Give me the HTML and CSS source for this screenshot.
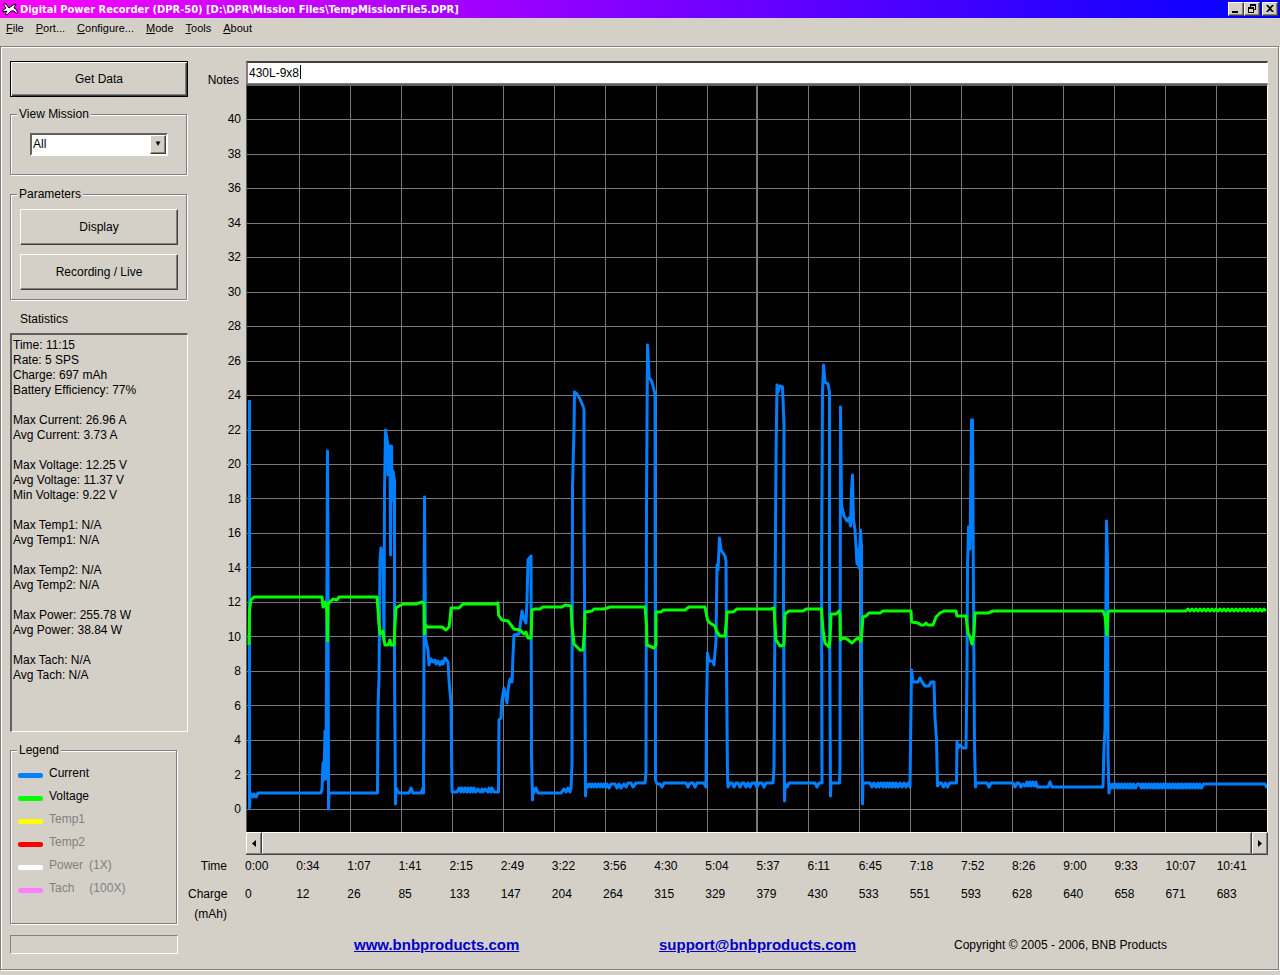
FILE: index.html
```html
<!DOCTYPE html>
<html lang="en">
<head>
    <meta charset="UTF-8">
    <meta name="viewport" content="width=device-width, initial-scale=1.0">
    <title>Digital Power Recorder (DPR-50)</title>
    <link rel="stylesheet" href="styles.css">
</head>
<body>
    <header class="titlebar">
        <svg class="app-icon" width="16" height="16" viewBox="0 0 16 16">
            <path d="M1 3h3l3 4 4-3 3-1-2 4 2 1 2 4-2 0-2-2-3 0-4 4-2-1 2-3-4 1 0-2 3-2z" fill="#fff" stroke="#000" stroke-width="1"/>
        </svg>
        <h1>Digital Power Recorder (DPR-50) [D:\DPR\Mission Files\TempMissionFile5.DPR]</h1>
        <div class="window-buttons">
            <button aria-label="Minimize"><svg width="12" height="10" viewBox="0 0 12 10"><path d="M2 7h6v2H2z"/></svg></button>
            <button aria-label="Restore"><svg width="12" height="10" viewBox="0 0 12 10"><path d="M4 0h6v6H8V5h1V2H5v1H4zM2 3h6v6H2zM3 5v3h4V5z" fill-rule="evenodd"/></svg></button>
            <button aria-label="Close" class="close"><svg width="12" height="10" viewBox="0 0 12 10"><path d="M2 1h2l2 2 2-2h2L7 4.500 10 8H8L6 6 4 8H2l3-3.500z"/></svg></button>
        </div>
    </header>

    <nav class="menubar">
        <button><u>F</u>ile</button>
        <button><u>P</u>ort...</button>
        <button><u>C</u>onfigure...</button>
        <button><u>M</u>ode</button>
        <button><u>T</u>ools</button>
        <button><u>A</u>bout</button>
    </nav>

    <main class="frame">
        <aside class="sidebar">
            <button class="btn default">Get Data</button>

            <fieldset class="group mission">
                <legend>View Mission</legend>
                <div class="combo">
                    <select aria-label="View Mission">
                        <option>All</option>
                    </select>
                </div>
            </fieldset>

            <fieldset class="group params">
                <legend>Parameters</legend>
                <div class="param-buttons">
                    <button class="btn">Display</button>
                    <button class="btn">Recording / Live</button>
                </div>
            </fieldset>

            <h2 class="stats-title">Statistics</h2>
            <div class="stats">
                <p>Time: 11:15<br>Rate: 5 SPS<br>Charge: 697 mAh<br>Battery Efficiency: 77%</p>
                <p>Max Current: 26.96 A<br>Avg Current: 3.73 A</p>
                <p>Max Voltage: 12.25 V<br>Avg Voltage: 11.37 V<br>Min Voltage: 9.22 V</p>
                <p>Max Temp1: N/A<br>Avg Temp1: N/A</p>
                <p>Max Temp2: N/A<br>Avg Temp2: N/A</p>
                <p>Max Power: 255.78 W<br>Avg Power: 38.84 W</p>
                <p>Max Tach: N/A<br>Avg Tach: N/A</p>
            </div>

            <fieldset class="group series">
                <legend>Legend</legend>
                <ul>
                    <li class="current">Current</li>
                    <li class="voltage">Voltage</li>
                    <li class="temp1 off">Temp1</li>
                    <li class="temp2 off">Temp2</li>
                    <li class="power off">Power<span>(1X)</span></li>
                    <li class="tach off">Tach<span>(100X)</span></li>
                </ul>
            </fieldset>

            <div class="status"></div>
        </aside>

        <section class="chart">
            <label class="notes-label" for="notes">Notes</label>
            <div class="notes">
                <input type="text" id="notes" value="430L-9x8">
            </div>

            <div class="y-axis">
                <span>40</span><span>38</span><span>36</span><span>34</span><span>32</span><span>30</span><span>28</span>
                <span>26</span><span>24</span><span>22</span><span>20</span><span>18</span><span>16</span><span>14</span>
                <span>12</span><span>10</span><span>8</span><span>6</span><span>4</span><span>2</span><span>0</span>
            </div>
            <svg class="plot" viewBox="247 86 1020 746" preserveAspectRatio="none">
                <g class="grid">
                    <path d="M299.500 86v746M350.500 86v746M401.500 86v746M452.500 86v746M503.500 86v746M554.500 86v746M605.500 86v746M656.500 86v746M707.500 86v746M808.500 86v746M859.500 86v746M910.500 86v746M961.500 86v746M1012.500 86v746M1063.500 86v746M1114.500 86v746M1165.500 86v746M1216.500 86v746"/>
                    <path class="cursor" d="M757 86v746"/>
                    <path d="M247 119.500h1020M247 154.500h1020M247 188.500h1020M247 223.500h1020M247 257.500h1020M247 292.500h1020M247 326.500h1020M247 361.500h1020M247 395.500h1020M247 430.500h1020M247 464.500h1020M247 498.500h1020M247 533.500h1020M247 567.500h1020M247 602.500h1020M247 636.500h1020M247 671.500h1020M247 705.500h1020M247 740.500h1020M247 774.500h1020M247 809.500h1020"/>
                </g>
                <path class="trace current" d="M249.500 400V808L250 793l2 2 1 2 1-3 2 3 2-4H321L322 789 323 763 324 780 325 731 326 779 327 567 327.500 451 328 567 328.500 809 329 793H377.500
                    L378 708 379 678 380 560 381 548 383 559 384 640 384.500 492 385.500 430 388 446 388 475 390 446 390.500 555 391.500 446 392 500 393 471 394.500 482 394.500 667 395.500 804 396 788 397 790 399 793
                    H409L411 788 413 793H421L423 788 423.500 793 424.500 497 425.500 639 428 650 429 665 431 659 433 662 435 660 436 664 438 661 440 665 442 661 443 664 445 658 448 662 449 680 451 703 452 792
                    H457l2-4 2 4 1-4 2 4 1-4 2 4 1-4 2 4 1-4 2 4 1-4 2 4 2-3 2 3 2-3 1 3 2-3 3 3 1-4 2 4 1-4 2 4H498.500L499 720 501 718 502 700 504 688 507 703 508 690 510 679 512 682 513 655 514 635 519 634 522 611 524 619 526 623 527 600 528 560 531 556
                    L531.500 755 532.500 800 533 788 534 793 536 788 538 793H561l3-4 2 3 2-4 2 4 1-4 1-25L572 693 572.500 487 574 430 574.500 392 577 394 580 399 583 406 584 410 584 500 585 692 585.500 796 586 784
                    l2 3 1-3 2 3 1-3 2 3 1-3 2 3 1-3 2 3 1-3 2 3 1-3 2 3 1-3 2 4 2-4 4 0 2 4 2-4 2 4 3-4 2 3 2-4h3l2 4 3-4H645L646 772 646.500 504 647.500 345 649 377 652 382 655 394 655.500 780 657 784
                    H660l2 3 2-4H686l2 4 2-4h3l2 4 2-4H704l2 4L706.500 710 707.500 653 709 661 713 661 714 665 716 640 717 565 718 570 719.500 538 721 550 725 556 726 561 726.500 664 727.500 778 728 787
                    l2-4 2 0 2 4 2-4 2 0 2 4 2-4 2 0 2 4 2-4 2 4 2-4h3l2 4 2-4h3l2 4 2-4H773L774 768 775 610 776 457 777 385 778 392 780 386 782.500 387 784 425 783.500 600 784.500 801 785 784 787 787 789 783
                    H815l2 4 2-4h3L821.500 582 822.500 392 823.500 365 825 382 828 384 829.500 392 829.500 595 830.500 796 831 783H839.500L840 766 840.500 407 841.500 505 844 516 847 521 849 518 850.500 526 851.500 490 852.500 475 853.500 520 855 530 857 564 858 549 859 568 860.500 530 861.500 546 861.500 685 862.500 804 863 783
                    H870l2 4 2-4 2 4 2-4 1 4 2-4 2 4 1-4 2 4 1-4 2 4 1-4 2 4 1-4 2 4 1-4 2 4 2-4 2 4 2-4 2 4 2-4 2 4L911.500 670 913 682 918 682 920 678 922 682 925 686 929 686 931 682 934 682 935 718 936.500 740 937.500 786
                    l2-3 2 0 2 4 2-4 2 4 2-4H956.500L957 742 958 748 960 745 963 748 966 748 967 671 967.500 568 968.500 527 970 549 971.500 420 972.500 420 973.500 600 974.500 746 975.500 787 976 783H987l2 4 2-4H1013
                    l2 4 2-4h2l2 4 2-3 2 2 2-4 1 4 2-4 1 4 2-4 1 4 2-4 1 5H1048l2-5 2 5H1103L1104 748 1105 729 1106.500 521 1107.500 560 1108 755 1109 793 1109.500 784
                    l2 4 1-4 2 4 1-4 2 4 1-4 2 4 1-4 2 4 1-4 2 4 1-4 2 4 1-4 2 4 1-4 2 4 2-4 2 0 2 4 1-4 2 4 1-4 2 4 1-4 2 4 1-4 2 4 1-4 2 4 1-4 2 4 1-4 2 4 1-4 2 4 1-4 2 4 1-4 2 4 1-4 2 4 1-4 2 4 1-4 2 4 1-4 2 4 1-4 2 4 1-4 2 4 1-4 2 4 1-4 2 4 1-4 2 4 1-4 2 4 2-4H1265l2 4"/>
                <path class="trace voltage" d="M249 645L249.500 610 251 600 254 597H322L323 607 325 602 327 612 327.500 641 328 604 331 601 333 599 337 600 339 597H377L378 610 379 625 380 634 383 631 384 640 385 645 388 645 390 640 391 645 394 645 395 625 396 608 399 606 403 604H416L422 602 424 603 424.500 634 425 625 428 627H442L446 630 449 627 450 620 451 608
                    H459L463 604H495L498 603 498.500 615 502 620 508 621 514 629 520 630 524 634 526 632 528 638H531L532 610 535 609H540L543 607H562L565 605 571 606 572 625 574 644 580 650H583L584.500 630 585 612 592 611 594 609H604L610 607H645L646.500 625 647 645 654 648 656 645V612L661 612 663 610H685L689 607H705L707.500 620 710 623 715 626 717 632 720 636H725L726.500 620 727 612H733L737 609H771L774 608
                    L775 625 776 640 780 646 784 645 785 614 789 611H803L806 609H821.500L823 630 825 643 829 647 830 640 831 614H836L839 611 840 614 840.500 640 843 638 847 639 852 643 855 640 858 638 861 641 862 630 863 617 866 616 869 613H880L883 611H911L911.500 622 918 623 921 625H924L926 623 928 625H933L936 617 940 613 944 611H956L957 616H966L968 633 970 637 972 644 974 633 975 613H988L993 611
                    H1103L1105 616 1107 635 1108 612 1110 611H1186l2-2 2 2 2-2 2 2 2-2 2 2 2-2 2 2 2-2 2 2 2-2 2 2 2-2 2 2 2-2 2 2 2-2 2 2 2-2 2 2 2-2 2 2 2-2 2 2 2-2 2 2 2-2 2 2 2-2 2 2 2-2 2 2 2-2 2 2 2-2 2 2 2-2 2 2 2-2 2 2"/>
            </svg>

            <div class="scrollbar">
                <button aria-label="Scroll left"><svg width="4" height="7" viewBox="0 0 4 7"><path d="M4 0v7L0 3.500z"/></svg></button>
                <div class="thumb"></div>
                <button aria-label="Scroll right"><svg width="4" height="7" viewBox="0 0 4 7"><path d="M0 0v7l4-3.500z"/></svg></button>
            </div>

            <table class="x-axis">
                <tr>
                    <th scope="row">Time</th>
                    <td>0:00</td><td>0:34</td><td>1:07</td><td>1:41</td><td>2:15</td><td>2:49</td><td>3:22</td><td>3:56</td><td>4:30</td><td>5:04</td>
                    <td>5:37</td><td>6:11</td><td>6:45</td><td>7:18</td><td>7:52</td><td>8:26</td><td>9:00</td><td>9:33</td><td>10:07</td><td>10:41</td>
                </tr>
                <tr>
                    <th scope="row">Charge<br>(mAh)</th>
                    <td>0</td><td>12</td><td>26</td><td>85</td><td>133</td><td>147</td><td>204</td><td>264</td><td>315</td><td>329</td>
                    <td>379</td><td>430</td><td>533</td><td>551</td><td>593</td><td>628</td><td>640</td><td>658</td><td>671</td><td>683</td>
                </tr>
            </table>

            <footer class="links">
                <a href="http://www.bnbproducts.com">www.bnbproducts.com</a>
                <a href="mailto:support@bnbproducts.com">support@bnbproducts.com</a>
                <span>Copyright © 2005 - 2006, BNB Products</span>
            </footer>
        </section>
    </main>
</body>
</html>
```
FILE: styles.css
```css
*, *::before, *::after {
    box-sizing: border-box;
}
body {
    margin: 0;
    min-height: 100vh;
    display: flex;
    flex-direction: column;
    background: #d4d0c8;
    color: #000;
    font-family: "Liberation Sans", Arial, sans-serif;
    font-size: 12px;
    line-height: 15px;
}
button, input, select {
    font: inherit;
    color: inherit;
}

/* title bar */
.titlebar {
    display: flex;
    align-items: center;
    height: 18px;
    padding: 0 2px;
    background: linear-gradient(to right, #ff00ff, #0000ff);
}
.titlebar h1 {
    flex: 1;
    margin: 0 0 0 2px;
    color: #fff;
    font-family: "DejaVu Sans Condensed", "Liberation Sans", sans-serif;
    font-size: 11px;
    font-weight: bold;
    white-space: nowrap;
}
.window-buttons {
    display: flex;
}
.window-buttons button {
    width: 16px;
    height: 14px;
    padding: 0;
    border: 1px solid;
    border-color: #fff #404040 #404040 #fff;
    background: #d4d0c8;
    box-shadow: inset -1px -1px 0 #808080;
}
.window-buttons svg {
    display: block;
    margin: 1px;
}
.window-buttons .close {
    margin-left: 2px;
}

/* menu */
.menubar {
    display: flex;
    gap: 12px;
    height: 28px;
    padding: 2px 6px 0;
}
.menubar button {
    height: 16px;
    padding: 0;
    border: none;
    background: none;
    font-size: 11px;
}

/* etched frame */
.frame {
    flex: 1;
    display: flex;
    margin: 0 1px 5px 0;
    padding: 14px 10px 0 9px;
    border: 1px solid #808080;
    box-shadow: 1px 1px 0 #fff, inset 1px 1px 0 #fff;
}
.sidebar {
    display: flex;
    flex-direction: column;
    flex: none;
    width: 178px;
}

.btn {
    display: block;
    width: 100%;
    height: 36px;
    padding: 0;
    border: 1px solid;
    border-color: #fff #404040 #404040 #fff;
    background: #d4d0c8;
    box-shadow: inset -1px -1px 0 #808080;
}
.btn.default {
    border-color: #000;
    box-shadow: inset 1px 1px 0 #fff, inset -1px -1px 0 #404040, inset -2px -2px 0 #808080;
}

.group {
    min-width: 0;
    margin: 0 1px 0 0;
    padding: 0;
    border: 1px solid #808080;
    box-shadow: 1px 1px 0 #fff, inset 1px 1px 0 #fff;
}
.group > legend {
    margin-left: 6px;
    padding: 0 2px;
    background: #d4d0c8;
}
.mission {
    height: 68px;
    margin-top: 10px;
}
.params {
    height: 113px;
    margin-top: 12px;
}
.param-buttons {
    padding: 7px 8px 0 9px;
}
.params .btn + .btn {
    margin-top: 9px;
}

.combo {
    position: relative;
    margin: 11px 18px 0 19px;
}
.combo select {
    display: block;
    width: 100%;
    height: 23px;
    padding: 0 0 0 1px;
    border: 2px solid;
    border-color: #606060 #fff #fff #606060;
    border-radius: 0;
    background: #fff;
    appearance: none;
}
.combo::after {
    content: "▼";
    position: absolute;
    top: 2px;
    right: 2px;
    width: 16px;
    height: 19px;
    border: 1px solid;
    border-color: #fff #404040 #404040 #fff;
    background: #d4d0c8;
    box-shadow: inset -1px -1px 0 #808080;
    font-family: "Liberation Sans", Arial, sans-serif;
    font-size: 8px;
    line-height: 16px;
    text-align: center;
    pointer-events: none;
}

.stats-title {
    margin: 12px 0 6px 10px;
    font-size: 12px;
    font-weight: normal;
}
.stats {
    height: 399px;
    padding: 3px 1px;
    border: 2px solid;
    border-color: #606060 #fff #fff #606060;
    border-right-width: 1px;
    border-bottom-width: 1px;
}
.stats p {
    margin: 0 0 15px;
}

.series {
    width: 167px;
    height: 181px;
    margin-top: 11px;
}
.series ul {
    margin: 0;
    padding: 4px 7px;
    list-style: none;
}
.series li {
    display: flex;
    align-items: center;
    height: 23px;
}
.series li::before {
    content: "";
    width: 25px;
    height: 5px;
    margin: 4px 6px 0 0;
    border-radius: 2px;
    background: #0080ff;
}
.series li.voltage::before { background: #00ff00; }
.series li.temp1::before { background: #ffff00; }
.series li.temp2::before { background: #ff0000; }
.series li.power::before { background: #fff; }
.series li.tach::before { background: #ff80ff; }
.series .off {
    color: #808080;
}
.series .power span {
    margin-left: 6px;
}
.series .tach span {
    margin-left: 15px;
}

.status {
    width: 168px;
    height: 19px;
    margin-top: 11px;
    border: 1px solid;
    border-color: #808080 #fff #fff #808080;
}

/* chart */
.chart {
    flex: 1;
    min-width: 0;
    display: grid;
    grid-template-columns: 58px 1fr;
    grid-template-rows: 23px auto auto auto auto;
    align-content: start;
}
.notes-label {
    padding: 12px 7px 0 0;
    text-align: right;
}
.notes {
    position: relative;
}
.notes input {
    display: block;
    width: 100%;
    height: 23px;
    padding: 0 1px;
    border: 1px solid;
    border-color: #404040 #fff #808080 #808080;
    border-top-width: 2px;
    border-left-width: 2px;
    background: #fff;
    outline: none;
}
/* text caret */
.notes::after {
    content: "";
    position: absolute;
    top: 4px;
    left: 54px;
    width: 1px;
    height: 14px;
    background: #000;
}
.y-axis {
    display: flex;
    flex-direction: column;
    justify-content: space-between;
    padding: 28px 5px 15px 0;
    text-align: right;
}
.plot {
    display: block;
    width: 100%;
    height: 748px;
    border: 1px solid;
    border-color: #606060 #fff #000 #606060;
    border-top-width: 2px;
    border-bottom: none;
    background: #000;
}
.grid path {
    stroke: #787878;
    fill: none;
    shape-rendering: crispEdges;
}
.grid .cursor {
    stroke-width: 2;
}
.trace {
    fill: none;
    stroke-width: 3;
    stroke-linejoin: round;
}
.trace.current {
    stroke: #0080ff;
}
.trace.voltage {
    stroke: #00ff00;
}

.scrollbar {
    grid-column: 2;
    display: flex;
    height: 23px;
    border-bottom: 1px solid #404040;
}
.scrollbar button, .thumb {
    border: 1px solid;
    border-color: #fff #404040 #808080 #fff;
    background: #d4d0c8;
    box-shadow: inset -1px 0 0 #808080;
}
.scrollbar button {
    display: flex;
    align-items: center;
    justify-content: center;
    width: 16px;
    padding: 0;
}
.thumb {
    flex: 1;
}

.x-axis {
    grid-column: 1 / 3;
    width: 100%;
    margin-top: 1px;
    table-layout: fixed;
    border-collapse: collapse;
    line-height: 20px;
}
.x-axis th {
    width: 57px;
    padding: 0 18px 8px 0;
    font-weight: normal;
    text-align: right;
    vertical-align: top;
}
.x-axis td {
    padding: 0;
    vertical-align: top;
}

.links {
    grid-column: 1 / 3;
    display: grid;
    grid-template-columns: 305fr 295fr 314fr;
    padding: 4px 0 0 166px;
    line-height: 18px;
}
.links a {
    justify-self: start;
    color: #0000c8;
    font-size: 15px;
    font-weight: bold;
}
```
